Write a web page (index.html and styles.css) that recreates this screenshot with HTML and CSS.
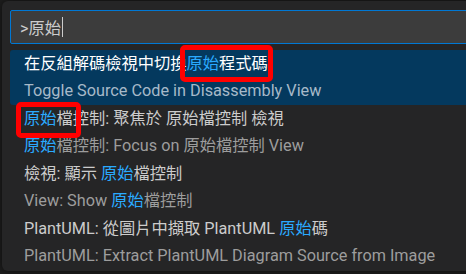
FILE: index.html
```html
<!DOCTYPE html>
<html lang="zh-TW">
<head>
    <meta charset="UTF-8">
    <title>Command Palette</title>
    <link rel="stylesheet" href="styles.css">
</head>
<body>
    <div class="paleta">
        <div class="entrada">
            <span>&gt;原始</span><span class="cursor"></span>
        </div>
        <ul class="lista">
            <li class="item ativo">
                <div class="rotulo">在反組解碼檢視中切換<b>原始</b>程式碼</div>
                <div class="detalhe">Toggle Source Code in Disassembly View</div>
            </li>
            <li class="item">
                <div class="rotulo"><b>原始</b>檔控制: 聚焦於 原始檔控制 檢視</div>
                <div class="detalhe"><b>原始</b>檔控制: Focus on 原始檔控制 View</div>
            </li>
            <li class="item">
                <div class="rotulo">檢視: 顯示 <b>原始</b>檔控制</div>
                <div class="detalhe">View: Show <b>原始</b>檔控制</div>
            </li>
            <li class="item">
                <div class="rotulo">PlantUML: 從圖片中擷取 PlantUML <b>原始</b>碼</div>
                <div class="detalhe">PlantUML: Extract PlantUML Diagram Source from Image</div>
            </li>
        </ul>
    </div>
    <!-- marcações vermelhas por cima da lista -->
    <div class="marca marca1"></div>
    <div class="marca marca2"></div>
</body>
</html>
```

FILE: styles.css
```css
* {
    margin: 0;
    padding: 0;
    box-sizing: border-box;
}

body {
    width: 466px;
    height: 274px;
    overflow: hidden;
    background-color: #1e1e1e;
    font-family: Roboto, "Noto Sans CJK TC", sans-serif;
    font-size: 16.25px;
    color: #cccccc;
    position: relative;
}

.paleta {
    width: 480px;
    height: 270px;
    margin: 1px 0 0 2px;
    padding: 9px 0 0 8px;
    background-color: #252526;
    border-radius: 6px;
    box-shadow: 0 0 8px rgba(0, 0, 0, 0.6);
}

.entrada {
    display: flex;
    align-items: center;
    height: 34px;
    padding-left: 9px;
    background-color: #3c3c3c;
    border: 1px solid #0078d4;
    border-radius: 2px;
    color: #cccccc;
}

.cursor {
    width: 1px;
    height: 20px;
    margin-left: 1px;
    background-color: #cccccc;
}

.lista {
    list-style-type: none;
    margin-top: 6px;
}

.item {
    height: 55px;
    padding: 0 0 0 14px;
    border-radius: 3px;
    white-space: nowrap;
}

.rotulo,
.detalhe {
    height: 27px;
    line-height: 27px;
}

.detalhe {
    color: #9d9d9d;
}

.item b {
    font-weight: normal;
    color: #2aaaff;
}

.ativo {
    background-color: #04395e;
}

.ativo .rotulo {
    color: #ffffff;
}

.ativo .detalhe {
    color: #a7b9c9;
}

.marca {
    position: absolute;
    border: 5px solid #ff0000;
    border-radius: 5px;
}

.marca1 {
    left: 180px;
    top: 45px;
    width: 93px;
    height: 37px;
}

.marca2 {
    left: 16px;
    top: 102px;
    width: 65px;
    height: 36px;
}
```
